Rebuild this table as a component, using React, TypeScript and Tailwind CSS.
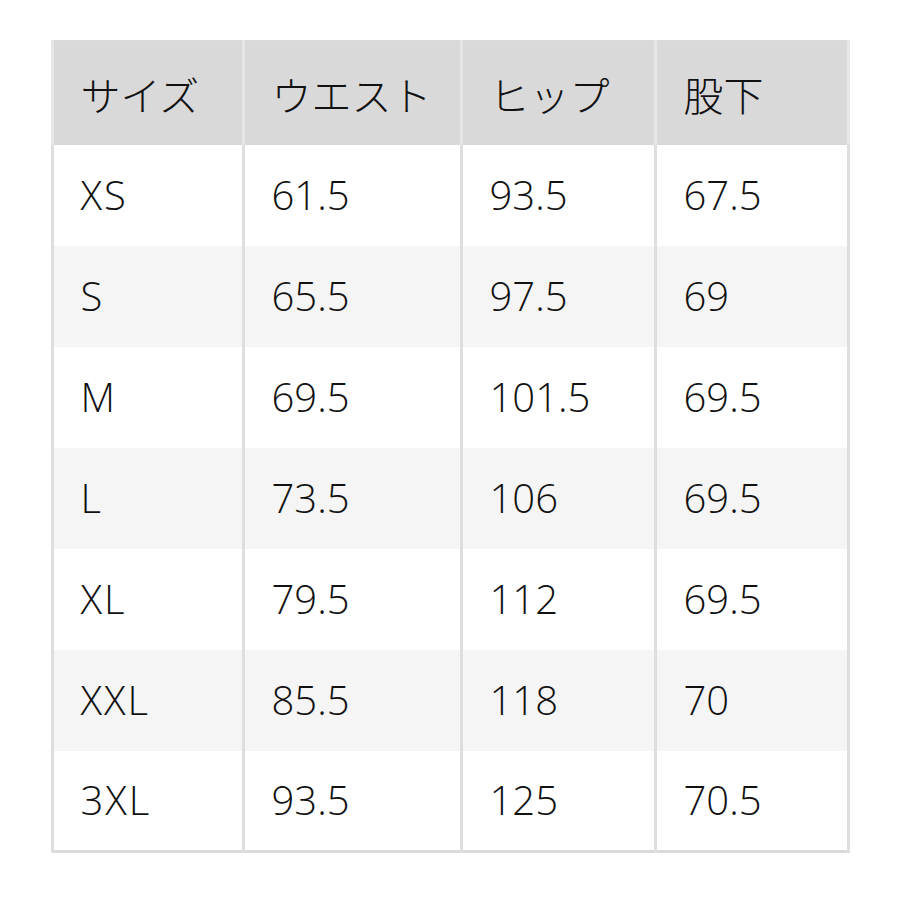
const header = ['サイズ', 'ウエスト', 'ヒップ', '股下']

const rows = [
  ['XS', '61.5', '93.5', '67.5'],
  ['S', '65.5', '97.5', '69'],
  ['M', '69.5', '101.5', '69.5'],
  ['L', '73.5', '106', '69.5'],
  ['XL', '79.5', '112', '69.5'],
  ['XXL', '85.5', '118', '70'],
  ['3XL', '93.5', '125', '70.5'],
]

const widths = ['w-[191px]', 'w-[218px]', 'w-[194px]', 'w-[193px]']

export default function App() {
  return (
    <div className="min-h-[900px] w-[900px] bg-white pt-[40px] font-['Open_Sans','Noto_Sans_CJK_JP',sans-serif] font-light text-[#111]">
      <table className="mx-auto w-[796px] table-fixed border-collapse border-[3px] border-[#dadada]">
        <thead>
          <tr className="h-[103px] bg-[#d9d9d9]">
            {header.map((h, i) => (
              <th
                key={i}
                className={`${widths[i]} border-x-[3px] border-[#e6e6e6] pl-[27px] text-left text-[40px] font-light font-['Noto_Sans_CJK_JP',sans-serif]`}
              >
                {h}
              </th>
            ))}
          </tr>
        </thead>
        <tbody>
          {rows.map((r, ri) => (
            <tr key={ri} className={`h-[101px] ${ri % 2 === 1 ? 'bg-[#f5f5f5]' : 'bg-white'}`}>
              {r.map((c, ci) => (
                <td
                  key={ci}
                  className={
                    ci === 0
                      ? "border-x-[3px] border-[#dedede] pl-[27px] text-[40px] leading-none tracking-[2px]"
                      : 'border-x-[3px] border-[#dedede] pl-[27px] text-[40px] leading-none'
                  }
                >
                  {c}
                </td>
              ))}
            </tr>
          ))}
        </tbody>
      </table>
    </div>
  )
}
